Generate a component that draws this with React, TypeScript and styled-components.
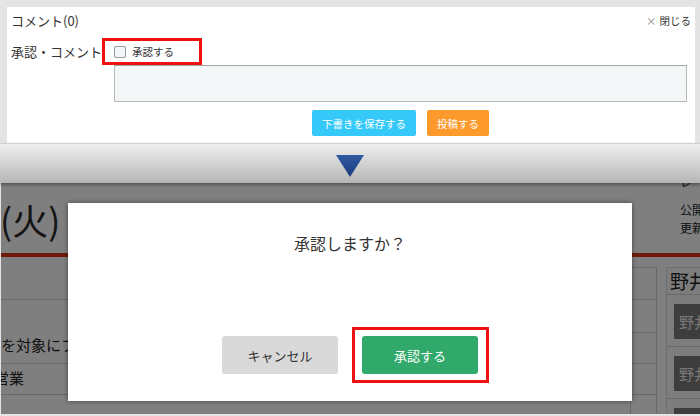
import * as React from 'react'
import styled, { createGlobalStyle } from 'styled-components'

const GlobalStyle = createGlobalStyle`
    html, body {
        margin: 0;
        padding: 0;
    }
    body {
        width: 700px;
        height: 416px;
        overflow: hidden;
        font-family: "Noto Sans CJK JP", "Noto Sans", sans-serif;
        color: #333;
    }
`

const Page = styled.div`
    width: 700px;
    height: 416px;
    display: flex;
    flex-direction: column;
    background: #e4e4e4;
    overflow: hidden;
`

/* ---------- upper: comment form ---------- */

const Frame = styled.div`
    padding: 7px 5px 0 7px;
`

const CommentPanel = styled.section`
    height: 136px;
    box-sizing: border-box;
    background: #fff;
    display: grid;
    grid-template-columns: 95px 1fr;
    grid-template-rows: 31px 27px 37px auto;
    padding-right: 8px;
`

const PanelHeader = styled.div`
    grid-column: 1 / 3;
    display: flex;
    justify-content: space-between;
    align-items: flex-start;
    padding: 4px 0 0 4px;
    margin-right: -4px;
`

const PanelTitle = styled.h2`
    margin: 0;
    font-size: 13px;
    line-height: 20px;
    font-weight: normal;
    color: #333;
`

const CloseLink = styled.span`
    font-size: 10.5px;
    line-height: 20px;
    color: #333;
    span {
        color: #888;
        margin-right: 3px;
    }
`

const FieldLabel = styled.label`
    grid-row: 2;
    padding-left: 4px;
    font-size: 13px;
    line-height: 27px;
    color: #333;
    white-space: nowrap;
`

const Highlight = styled.div<{ $w: number; $h: number }>`
    width: ${p => p.$w}px;
    height: ${p => p.$h}px;
    box-sizing: border-box;
    border: 3px solid #ee1111;
    display: flex;
    align-items: center;
`

const CheckLabel = styled.label`
    display: flex;
    align-items: center;
    padding-left: 9px;
    font-size: 10.5px;
    color: #333;
    gap: 6px;
`

const CheckBox = styled.span`
    width: 12px;
    height: 12px;
    box-sizing: border-box;
    border: 1px solid #9a9a9a;
    border-radius: 2px;
    background: #f3f6f8;
`

const TextArea = styled.div`
    grid-column: 2;
    margin-left: 12px;
    box-sizing: border-box;
    background: #f4f7f8;
    border: 1px solid #b8b8b8;
    border-top-color: #a6a6a6;
`

const FormActions = styled.div`
    grid-column: 2;
    margin-left: 12px;
    padding-top: 8px;
    display: flex;
    justify-content: center;
    gap: 11px;
`

const SmallButton = styled.button<{ $color: string; $w: number }>`
    width: ${p => p.$w}px;
    height: 26px;
    border: none;
    border-radius: 2px;
    background: ${p => p.$color};
    color: #fff;
    font-family: inherit;
    font-size: 10.5px;
    padding: 0;
`

/* ---------- divider with arrow ---------- */

const ArrowBand = styled.div`
    position: relative;
    z-index: 2;
    height: 40px;
    flex: none;
    display: flex;
    justify-content: center;
    padding-top: 11px;
    box-sizing: border-box;
    background: linear-gradient(#efefef, #b6b6b6);
    border-top: 1px solid #d0d0d0;
    box-shadow: 0 2px 3px rgba(0, 0, 0, 0.35);
`

/* ---------- lower: dimmed page with dialog ---------- */

const Screen = styled.div`
    position: relative;
    flex: 1;
    margin: 0 0 2px 1px;
    overflow: hidden;
    background: #fff;
`

const BgHeader = styled.div`
    height: 70px;
    display: flex;
    justify-content: space-between;
`

const DayText = styled.div`
    font-size: 36px;
    line-height: 1;
    padding-top: 18px;
    margin-left: -1px;
    color: #2a2a2a;
`

const Meta = styled.div`
    width: 20px;
    margin-top: -10px;
    font-size: 12px;
    line-height: 18px;
    color: #222;
    white-space: nowrap;
    overflow: hidden;
    div:first-child {
        margin-bottom: 10px;
    }
`

const RedRule = styled.div`
    height: 4px;
    background: #e03418;
`

const BgBody = styled.div`
    display: grid;
    grid-template-columns: 656px 1fr;
    gap: 9px;
    padding-top: 10px;
`

const BgTable = styled.div`
    display: grid;
    grid-template-columns: 1fr 26px;
    grid-template-rows: 32px 33px 31px 31px 40px;
    border-right: 1px solid #cfcfcf;
`

const LeftCell = styled.div<{ $span?: number; $line?: boolean }>`
    grid-column: 1;
    grid-row: span ${p => p.$span || 1};
    border-top: ${p => (p.$line ? '1px solid #cfcfcf' : 'none')};
    display: flex;
    align-items: flex-end;
    font-size: 15px;
    color: #222;
    white-space: nowrap;
    overflow: hidden;
`

const CellText = styled.span<{ $indent: number; $bottom: number }>`
    margin-left: ${p => p.$indent}px;
    padding-bottom: ${p => p.$bottom}px;
`

const SideCell = styled.div`
    grid-column: 2;
    border-top: 1px solid #cfcfcf;
    border-left: 1px solid #cfcfcf;
`

const Sidebar = styled.aside`
    border-top: 1px solid #dcdcdc;
    border-left: 1px solid #dcdcdc;
    background: #fafafa;
`

const SideTitle = styled.div`
    height: 26px;
    padding-left: 3px;
    font-size: 19px;
    line-height: 26px;
    color: #222;
    border-bottom: 1px solid #d0d0d0;
    white-space: nowrap;
`

const SideItem = styled.div`
    padding: 9px 0 7px 7px;
    border-bottom: 1px solid #d0d0d0;
`

const Tile = styled.div`
    height: 35px;
    background: #7a7a7a;
    color: #f2f2f2;
    font-size: 15px;
    line-height: 35px;
    padding-left: 5px;
    white-space: nowrap;
`

const Overlay = styled.div`
    position: absolute;
    inset: 0;
    background: rgba(0, 0, 0, 0.5);
`

const Dialog = styled.div`
    position: absolute;
    left: 67px;
    top: 20px;
    width: 564px;
    height: 198px;
    box-sizing: border-box;
    background: #fff;
    box-shadow: 0 0 5px rgba(0, 0, 0, 0.45);
    display: flex;
    flex-direction: column;
    align-items: center;
    padding: 28px 0 18px;
`

const DialogTitle = styled.p`
    margin: 0;
    font-size: 16px;
    line-height: 24px;
    color: #333;
`

const DialogActions = styled.div`
    margin-top: auto;
    display: flex;
    align-items: center;
    gap: 14px;
    padding-left: 11px;
`

const DialogButton = styled.button<{ $primary?: boolean }>`
    width: 116px;
    height: 38px;
    border: none;
    border-radius: 3px;
    background: ${p => (p.$primary ? '#30a96b' : '#d9d9d9')};
    color: ${p => (p.$primary ? '#fff' : '#333')};
    font-family: inherit;
    font-size: 13px;
    padding: 0;
`

const DownArrow = () => (
    <svg width="28" height="22" viewBox="0 0 28 22">
        <defs>
            <linearGradient id="arrowFill" x1="0" y1="0" x2="0" y2="1">
                <stop offset="0" stopColor="#2f5aa3" />
                <stop offset="1" stopColor="#1d3c7c" />
            </linearGradient>
        </defs>
        <polygon points="0,0 28,0 14,22" fill="url(#arrowFill)" />
    </svg>
)

export default class App extends React.Component<{}, {}> {
    public render() {
        return <Page>
            <GlobalStyle />
            <Frame>
                <CommentPanel>
                    <PanelHeader>
                        <PanelTitle>コメント(0)</PanelTitle>
                        <CloseLink><span>×</span>閉じる</CloseLink>
                    </PanelHeader>
                    <FieldLabel>承認・コメント</FieldLabel>
                    <Highlight $w={100} $h={27}>
                        <CheckLabel>
                            <CheckBox />
                            承認する
                        </CheckLabel>
                    </Highlight>
                    <span />
                    <TextArea />
                    <span />
                    <FormActions>
                        <SmallButton $color="#35c9fa" $w={104}>下書きを保存する</SmallButton>
                        <SmallButton $color="#fd9a2b" $w={62}>投稿する</SmallButton>
                    </FormActions>
                </CommentPanel>
            </Frame>
            <ArrowBand>
                <DownArrow />
            </ArrowBand>
            <Screen>
                <BgHeader>
                    <DayText>(火)</DayText>
                    <Meta>
                        <div>レー</div>
                        <div>公開</div>
                        <div>更新</div>
                    </Meta>
                </BgHeader>
                <RedRule />
                <BgBody>
                    <BgTable>
                        <LeftCell />
                        <SideCell />
                        <LeftCell $span={2} $line>
                            <CellText $indent={0} $bottom={8}>を対象にファイル</CellText>
                        </LeftCell>
                        <SideCell />
                        <SideCell />
                        <LeftCell $line>
                            <CellText $indent={-7} $bottom={6}>営業</CellText>
                        </LeftCell>
                        <SideCell />
                        <LeftCell $line />
                        <SideCell />
                    </BgTable>
                    <Sidebar>
                        <SideTitle>野井</SideTitle>
                        <SideItem><Tile>野井</Tile></SideItem>
                        <SideItem><Tile>野井</Tile></SideItem>
                        <SideItem><Tile>野井</Tile></SideItem>
                    </Sidebar>
                </BgBody>
                <Overlay />
                <Dialog>
                    <DialogTitle>承認しますか？</DialogTitle>
                    <DialogActions>
                        <DialogButton>キャンセル</DialogButton>
                        <Highlight $w={137} $h={56}>
                            <DialogButton $primary style={{ marginLeft: 7 }}>承認する</DialogButton>
                        </Highlight>
                    </DialogActions>
                </Dialog>
            </Screen>
        </Page>
    }
}
